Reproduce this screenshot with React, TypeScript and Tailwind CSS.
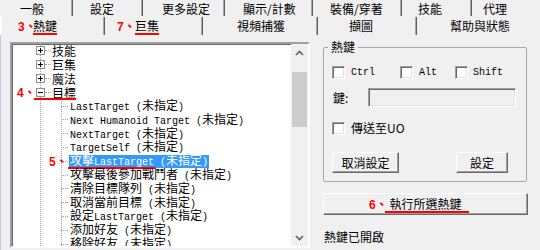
const CJK_RE = /([\u2e80-\u9fff\u3000-\u303f\uff00-\uffef]+)/;

const topTabs = [
  { label: '一般', w: 73, pl: 20 },
  { label: '設定', w: 70, pl: 17 },
  { label: '更多設定', w: 82, pl: 19 },
  { label: '顯示/計數', w: 88, pl: 18 },
  { label: '裝備/穿著', w: 89, pl: 17 },
  { label: '技能', w: 70, pl: 16 },
  { label: '代理', w: 68, pl: 11 },
];

const children = [
  'LastTarget (未指定)',
  'Next Humanoid Target (未指定)',
  'NextTarget (未指定)',
  'TargetSelf (未指定)',
  '攻擊LastTarget (未指定)',
  '攻擊最後參加戰鬥者 (未指定)',
  '清除目標隊列 (未指定)',
  '取消當前目標 (未指定)',
  '設定LastTarget (未指定)',
  '添加好友 (未指定)',
  '移除好友 (未指定)',
];

function Mixed({ text }: { text: string }) {
  // latin runs in a narrow mono face, hanzi at 12px
  const parts = text.split(CJK_RE).filter((p) => p !== '');
  return (
    <span className="whitespace-pre leading-[13px]">
      {parts.map((p, i) =>
        CJK_RE.test(p) ? (
          <span key={i} className="font-['Noto_Sans_CJK_TC',sans-serif] text-[12px] leading-[13px]">
            {p}
          </span>
        ) : (
          <span key={i} className="font-['Liberation_Mono',monospace] text-[10px] leading-[13px]">
            {p}
          </span>
        )
      )}
    </span>
  );
}

function Mark({ children }: { children: string }) {
  return (
    <span className="text-[#ff0000] font-bold text-[12px] leading-[13px] font-['Liberation_Sans','Noto_Sans_CJK_TC',sans-serif] whitespace-nowrap">
      {children}
    </span>
  );
}

function Expander({ open }: { open?: boolean }) {
  return (
    <svg width="9" height="9" viewBox="0 0 9 9" className="relative shrink-0 bg-white">
      <rect x="0.5" y="0.5" width="8" height="8" fill="#fff" stroke="#919191" />
      <path d="M2 4.5h5" stroke="#000" />
      {!open && <path d="M4.5 2v5" stroke="#000" />}
    </svg>
  );
}

function CheckBox() {
  return (
    <span className="block w-[13px] h-[13px] bg-white border border-t-[#a0a0a0] border-l-[#a0a0a0] border-b-white border-r-white shadow-[inset_1px_1px_0_#696969,inset_-1px_-1px_0_#e3e3e3]" />
  );
}

const btn =
  'flex items-center justify-center bg-[#f0f0f0] border border-t-white border-l-white border-b-[#696969] border-r-[#696969] shadow-[inset_-1px_-1px_0_#a0a0a0]';

function Chevron({ up }: { up?: boolean }) {
  return (
    <svg width="9" height="6" viewBox="0 0 9 6">
      <path d={up ? 'M1 5l3.5-3.5L8 5' : 'M1 1l3.5 3.5L8 1'} fill="none" stroke="#606060" strokeWidth="1.6" />
    </svg>
  );
}

export default function App() {
  return (
    <div className="w-[540px] h-[250px] overflow-hidden bg-[#f0f0f0] text-black text-[12px] font-['Noto_Sans_CJK_TC',sans-serif]">
      {/* tab rows */}
      <div className="flex h-[16px]">
        {topTabs.map((t, i) => (
          <div
            key={t.label}
            className={`flex items-center h-full pt-[2px] leading-[14px] whitespace-nowrap ${
              i < topTabs.length - 1 ? 'border-r border-[#5f5f5f] shadow-[inset_-1px_0_0_#a8a8a8]' : ''
            }`}
            style={{ width: t.w, paddingLeft: t.pl }}
          >
            {t.label}
          </div>
        ))}
      </div>
      <div className="flex h-[18px] mt-[1px]">
        <div className="flex items-center w-[105px] pl-[18px] border-r border-[#5f5f5f] shadow-[inset_-1px_0_0_#a8a8a8,inset_2px_0_0_#ffffff]">
          <span className="inline-block w-[15px]">
            <Mark>3、</Mark>
          </span>
          <span className="inline-block leading-[15px] border-b-2 border-[#ff0000]">熱鍵</span>
        </div>
        <div className="flex items-center w-[98px] pl-[12px] border-r border-[#5f5f5f] shadow-[inset_-1px_0_0_#a8a8a8]">
          <span className="inline-block w-[18px]">
            <Mark>7、</Mark>
          </span>
          <span className="inline-block leading-[15px] border-b-2 border-[#ff0000]">巨集</span>
        </div>
        <div className="flex items-center w-[115px] pl-[34px] border-r border-[#5f5f5f] shadow-[inset_-1px_0_0_#a8a8a8]">
          視頻捕獲
        </div>
        <div className="flex items-center w-[99px] pl-[31px] border-r border-[#5f5f5f] shadow-[inset_-1px_0_0_#a8a8a8]">
          擷圖
        </div>
        <div className="flex items-center w-[123px] pl-[33px]">幫助與狀態</div>
      </div>

      {/* body */}
      <div className="flex items-start h-[215px] border-l border-[#b9d1ea]">
        {/* tree view */}
        <div className="mt-[7px] ml-[9px] w-[300px] h-[206px] flex border-2 border-t-[#a0a0a0] border-l-[#a0a0a0] border-b-white border-r-white bg-white shadow-[inset_1px_1px_0_#696969]">
          <div className="relative flex-1 overflow-hidden">
            <div className="absolute left-[28px] top-0 bottom-0 border-l border-dotted border-[#a0a0a0]" />
            <div className="absolute left-[49px] top-[48px] bottom-0 border-l border-dotted border-[#a0a0a0]" />

            {['技能', '巨集', '魔法', '目標'].map((name, i) => (
              <div key={name} className="relative flex items-center h-[13.8px] pl-[24px] leading-[13px]">
                <Expander open={i === 3} />
                <span className="w-[6px] border-t border-dotted border-[#a0a0a0]" />
                <span className="ml-[1px] text-[12px] leading-[13px]">{name}</span>
                {i === 3 && (
                  <>
                    <span className="absolute left-[5px] top-0 leading-[13px]">
                      <Mark>4、</Mark>
                    </span>
                    <span className="absolute left-[22px] w-[42px] bottom-[-1px] h-[2px] bg-[#ff0000]" />
                  </>
                )}
              </div>
            ))}

            {children.map((c, i) => {
              const sel = i === 4;
              return (
                <div key={c} className="relative flex items-center h-[13.8px] pl-[49px] leading-[13px]">
                  <span className="w-[7px] border-t border-dotted border-[#a0a0a0]" />
                  <span className={`ml-[1px] px-[1px] h-[13px] flex items-center ${sel ? 'bg-[#3399ff] text-white' : ''}`}>
                    <Mixed text={c} />
                  </span>
                  {sel && (
                    <>
                      <span className="absolute left-[37px] top-0 leading-[13px]">
                        <Mark>5、</Mark>
                      </span>
                      <span className="absolute left-[56px] w-[87px] bottom-[-1px] h-[2px] bg-[#ff0000]" />
                    </>
                  )}
                </div>
              );
            })}
          </div>

          {/* scrollbar */}
          <div className="w-[17px] flex flex-col bg-[#f0f0f0]">
            <div className="h-[17px] flex items-center justify-center">
              <Chevron up />
            </div>
            <div className="h-[11px]" />
            <div className="h-[55px] mx-[1px] bg-[#cdcdcd]" />
            <div className="flex-1" />
            <div className="h-[17px] flex items-center justify-center">
              <Chevron />
            </div>
          </div>
        </div>

        {/* right side */}
        <div className="ml-[13px] mt-[5px] w-[205px] flex flex-col">
          <fieldset className="w-[204px] border border-[#a8a8a8] rounded-[2px] px-[8px] pb-[8px]">
            <legend className="ml-[-4px] px-[3px] leading-[14px]">熱鍵</legend>

            <div className="flex items-center h-[14px] mt-[11px]">
              <label className="flex items-center w-[68px]">
                <CheckBox />
                <span className="ml-[6px] font-['Liberation_Mono',monospace] text-[10px]">Ctrl</span>
              </label>
              <label className="flex items-center w-[55px]">
                <CheckBox />
                <span className="ml-[6px] font-['Liberation_Mono',monospace] text-[10px]">Alt</span>
              </label>
              <label className="flex items-center">
                <CheckBox />
                <span className="ml-[5px] font-['Liberation_Mono',monospace] text-[10px]">Shift</span>
              </label>
            </div>

            <div className="flex items-center mt-[9px]">
              <span className="w-[36px] pl-[1px]">鍵:</span>
              <div className="w-[148px] h-[19px] bg-[#f0f0f0] border border-t-[#a0a0a0] border-l-[#a0a0a0] border-b-white border-r-white shadow-[inset_1px_1px_0_#696969,inset_-1px_-1px_0_#e3e3e3]" />
            </div>

            <div className="flex items-center h-[14px] mt-[14px]">
              <CheckBox />
              <span className="ml-[6px]">傳送至UO</span>
            </div>

            <div className="flex justify-between pr-[10px] mt-[17px]">
              <button className={`${btn} w-[67px] h-[21px]`}>取消設定</button>
              <button className={`${btn} w-[52px] h-[21px]`}>設定</button>
            </div>
          </fieldset>

          <button className={`${btn} relative mt-[11px] w-[205px] h-[22px]`}>
            <span className="absolute left-[45px] top-[2px] leading-[15px]">
              <Mark>6、</Mark>
            </span>
            執行所選熱鍵
            <span className="absolute left-[61px] w-[84px] top-[17px] h-[2px] bg-[#ff0000]" />
          </button>

          <div className="mt-[14px] pl-[1px] leading-[16px]">熱鍵已開啟</div>
        </div>
      </div>
    </div>
  );
}
